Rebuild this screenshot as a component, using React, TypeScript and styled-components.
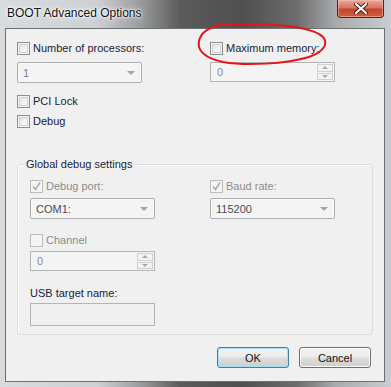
import styled, { createGlobalStyle } from "styled-components";

const GlobalStyle = createGlobalStyle`
    html, body {
        margin: 0;
        padding: 0;
        background: #cfd4d8;
    }
    body {
        font-family: "Liberation Sans", Arial, sans-serif;
        font-size: 11px;
    }
`;

const Window = styled.div`
    position: relative;
    width: 391px;
    height: 387px;
    box-sizing: border-box;
    padding: 0 6px 5px 5px;
    display: flex;
    flex-direction: column;
    background: linear-gradient(
        90deg,
        #d9dcdf 0%,
        #cdd0d3 25%,
        #9a9b9c 36%,
        #5b5b5b 46%,
        #4f4f4f 62%,
        #6d6d6d 76%,
        #a9abad 86%,
        #c9ccd0 100%
    );
`;

const TitleBar = styled.div`
    height: 28px;
    display: flex;
    justify-content: space-between;
    align-items: flex-start;
    margin-right: -6px;
    margin-left: 2px;
`;

const TitleText = styled.div`
    font-family: "Liberation Sans", Arial, sans-serif;
    font-size: 12px;
    color: #111;
    padding-top: 6px;
    text-shadow: 0 0 6px #fff, 0 0 3px #fff, 0 0 2px #fff;
`;

const CloseButton = styled.div`
    width: 47px;
    height: 18px;
    margin-right: 7px;
    box-sizing: border-box;
    border: 1px solid #5a2018;
    border-top: none;
    border-radius: 0 0 4px 4px;
    background: linear-gradient(180deg, #e9a99c 0%, #d8735f 45%, #c5452b 55%, #cf5e40 100%);
    box-shadow: inset 0 0 0 1px rgba(255, 200, 190, 0.5);
    display: flex;
    align-items: center;
    justify-content: center;
`;

const Client = styled.div`
    position: relative;
    flex: 1;
    background: #f0f0f0;
    border: 1px solid #6b7075;
    padding: 12px 13px 0 11px;
    color: #1b1b3a;
`;

const TopGrid = styled.div`
    display: grid;
    grid-template-columns: 193px 1fr;
`;

const Column = styled.div`
    display: flex;
    flex-direction: column;
    align-items: flex-start;
`;

const CheckRow = styled.div<{ $mt?: number }>`
    display: flex;
    align-items: center;
    gap: 3px;
    height: 15px;
    margin-top: ${(p) => p.$mt ?? 0}px;
`;

const Box = styled.div<{ $disabled?: boolean }>`
    width: 13px;
    height: 13px;
    box-sizing: border-box;
    border: 1px solid ${(p) => (p.$disabled ? "#bcbcbc" : "#8e8f8f")};
    background: ${(p) =>
        p.$disabled ? "#f4f4f4" : "linear-gradient(135deg, #dcdcdc 0%, #f4f4f4 60%, #fdfdfd 100%)"};
    box-shadow: ${(p) => (p.$disabled ? "none" : "inset 0 0 0 1px #f4f4f4, inset 0 0 0 2px #d2d2d2")};
    display: flex;
    align-items: center;
    justify-content: center;
`;

const Label = styled.span<{ $disabled?: boolean }>`
    line-height: 15px;
    white-space: nowrap;
    color: ${(p) => (p.$disabled ? "#8d8d8d" : "#1b1b3a")};
`;

const Combo = styled.div<{ $mt?: number; $dark?: boolean }>`
    width: 125px;
    height: 21px;
    margin-top: ${(p) => p.$mt ?? 0}px;
    box-sizing: border-box;
    border: 1px solid #adadad;
    border-radius: 2px;
    background: #f4f4f4;
    box-shadow: inset 0 0 0 1px #fafafa;
    display: flex;
    align-items: center;
    justify-content: space-between;
    padding: 0 5px 0 5px;
    color: ${(p) => (p.$dark ? "#4a4a5e" : "#7c7c98")};
`;

const Arrow = styled.div`
    width: 0;
    height: 0;
    border-left: 4px solid transparent;
    border-right: 4px solid transparent;
    border-top: 4px solid #a3a3a3;
    margin-right: 1px;
`;

const Spin = styled.div<{ $mt?: number }>`
    width: 125px;
    height: 20px;
    margin-top: ${(p) => p.$mt ?? 0}px;
    box-sizing: border-box;
    border: 1px solid #b5b5b5;
    background: #f4f4f4;
    display: flex;
    align-items: stretch;
    justify-content: space-between;
`;

const SpinValue = styled.span`
    padding-left: 6px;
    line-height: 18px;
    color: #8b8ba3;
`;

const SpinButtons = styled.div`
    width: 16px;
    display: flex;
    flex-direction: column;
    gap: 1px;
    padding: 1px;
`;

const SpinButton = styled.div`
    flex: 1;
    border: 1px solid #d0d0d0;
    background: #f3f3f3;
    display: flex;
    align-items: center;
    justify-content: center;
`;

const TinyArrow = styled.div<{ $up?: boolean }>`
    width: 0;
    height: 0;
    border-left: 3px solid transparent;
    border-right: 3px solid transparent;
    ${(p) => (p.$up ? "border-bottom: 3px solid #a8a8a8;" : "border-top: 3px solid #a8a8a8;")}
`;

const Group = styled.fieldset`
    margin: 28px 0 0 0;
    width: 356px;
    height: 178px;
    box-sizing: border-box;
    border: 1px solid #d5dfe5;
    border-radius: 3px;
    box-shadow: inset 1px 1px 0 #fff;
    padding: 8px 0 0 12px;
    display: grid;
    grid-template-columns: 180px 1fr;
    align-content: start;
`;

const Legend = styled.legend`
    margin-left: -5px;
    padding: 0 1px;
    line-height: 14px;
    color: #1b1b3a;
`;

const PlainLabel = styled.div<{ $mt?: number }>`
    margin-top: ${(p) => p.$mt ?? 0}px;
    line-height: 15px;
`;

const TextBox = styled.div`
    width: 125px;
    height: 23px;
    margin-top: 2px;
    box-sizing: border-box;
    border: 1px solid #b4b4b4;
    background: #f0f0f0;
`;

const ButtonRow = styled.div`
    display: flex;
    justify-content: flex-end;
    gap: 10px;
    margin-top: 12px;
`;

const Button = styled.div<{ $default?: boolean }>`
    width: 72px;
    height: 21px;
    box-sizing: border-box;
    border: 1px solid ${(p) => (p.$default ? "#3c7fb1" : "#707070")};
    border-radius: 3px;
    background: linear-gradient(180deg, #f2f2f2 0%, #ebebeb 49%, #dddddd 51%, #cfcfcf 100%);
    box-shadow: inset 0 0 0 1px ${(p) => (p.$default ? "#a6e0f7" : "#fbfbfb")};
    display: flex;
    align-items: center;
    justify-content: center;
    color: #111;
`;

const Scribble = styled.svg`
    position: absolute;
    left: -5px;
    top: -28px;
    pointer-events: none;
`;

type CheckProps = { label: string; checked?: boolean; disabled?: boolean; mt?: number };

const Check = ({ label, checked, disabled, mt }: CheckProps) => (
    <CheckRow $mt={mt}>
        <Box $disabled={disabled}>
            {checked && (
                <svg width="9" height="9" viewBox="0 0 9 9">
                    <path d="M1 4.5 L3.5 7.5 L8 0.5" fill="none" stroke="#a8a8a8" strokeWidth="1.4" />
                </svg>
            )}
        </Box>
        <Label $disabled={disabled}>{label}</Label>
    </CheckRow>
);

const ComboBox = ({ value, mt, dark }: { value: string; mt?: number; dark?: boolean }) => (
    <Combo $mt={mt} $dark={dark}>
        <span>{value}</span>
        <Arrow />
    </Combo>
);

const SpinBox = ({ value, mt }: { value: string; mt?: number }) => (
    <Spin $mt={mt}>
        <SpinValue>{value}</SpinValue>
        <SpinButtons>
            <SpinButton>
                <TinyArrow $up />
            </SpinButton>
            <SpinButton>
                <TinyArrow />
            </SpinButton>
        </SpinButtons>
    </Spin>
);

export default function App() {
    return (
        <>
            <GlobalStyle />
            <Window>
                <TitleBar>
                    <TitleText>BOOT Advanced Options</TitleText>
                    <CloseButton>
                        <svg width="14" height="11" viewBox="0 0 14 11">
                            <path
                                d="M2 1 L12 10 M12 1 L2 10"
                                stroke="#3a1a14"
                                strokeWidth="4"
                                strokeLinecap="round"
                            />
                            <path d="M2 1 L12 10 M12 1 L2 10" stroke="#fff" strokeWidth="2.2" strokeLinecap="round" />
                        </svg>
                    </CloseButton>
                </TitleBar>
                <Client>
                    <TopGrid>
                        <Column>
                            <Check label="Number of processors:" />
                            <ComboBox value="1" mt={6} />
                            <Check label="PCI Lock" mt={11} />
                            <Check label="Debug" mt={5} />
                        </Column>
                        <Column>
                            <Check label="Maximum memory:" />
                            <SpinBox value="0" mt={6} />
                        </Column>
                    </TopGrid>
                    <Group>
                        <Legend>Global debug settings</Legend>
                        <Column>
                            <Check label="Debug port:" checked disabled />
                            <ComboBox value="COM1:" mt={4} dark />
                            <Check label="Channel" disabled mt={14} />
                            <SpinBox value="0" mt={3} />
                            <PlainLabel $mt={15}>USB target name:</PlainLabel>
                            <TextBox />
                        </Column>
                        <Column>
                            <Check label="Baud rate:" checked disabled />
                            <ComboBox value="115200" mt={4} dark />
                        </Column>
                    </Group>
                    <ButtonRow>
                        <Button $default>OK</Button>
                        <Button>Cancel</Button>
                    </ButtonRow>
                    <Scribble width="391" height="100" viewBox="0 0 391 100">
                        <path
                            d="M219 24 C 210 26, 200 31, 198 40 C 196 50, 204 57, 222 61 C 245 65, 285 63, 308 56 C 322 51, 328 43, 322 36 C 314 28, 290 24, 255 23 C 238 23, 225 23, 214 25"
                            fill="none"
                            stroke="#e8141a"
                            strokeWidth="2"
                            strokeLinecap="round"
                        />
                    </Scribble>
                </Client>
            </Window>
        </>
    );
}
